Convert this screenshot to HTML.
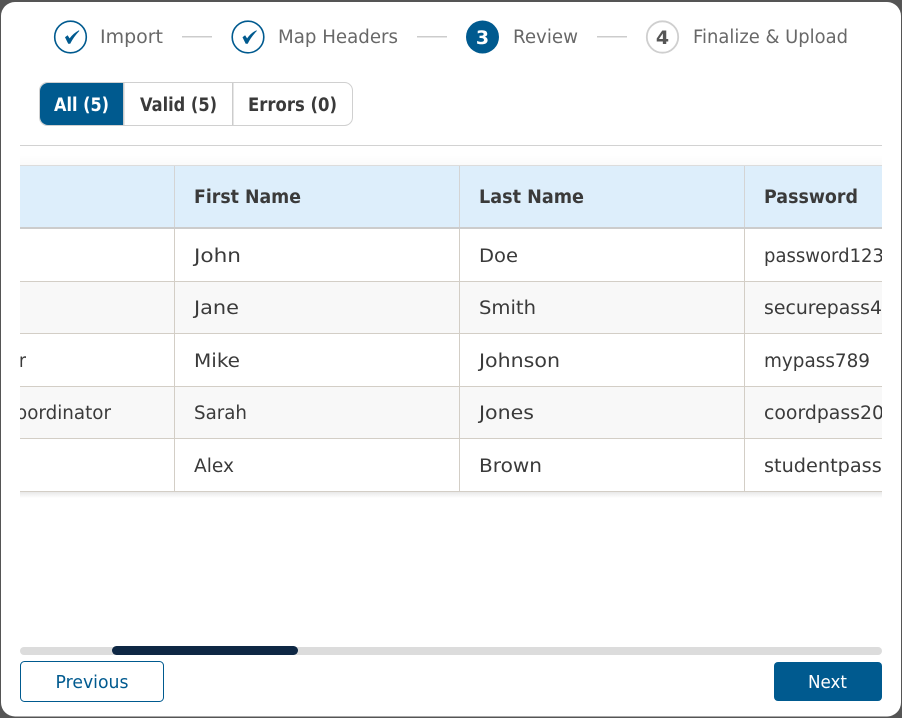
<!DOCTYPE html>
<html lang="en">
<head>
<meta charset="utf-8">
<title>Review</title>
<style>
html,body{margin:0;padding:0;width:902px;height:718px;overflow:hidden;background:#555}
svg{display:block}
text{font-family:"DejaVu Sans","Liberation Sans",sans-serif;font-size:18.500px;fill:#3a3a3a}
.s{fill:#686868}
.b{font-weight:700;fill:#3a3a3a;font-size:18.500px}
</style>
</head>
<body>
<svg width="902" height="718" viewBox="0 0 902 718" xmlns="http://www.w3.org/2000/svg">
<defs>
<clipPath id="c"><rect x="20" y="165" width="862" height="330"/></clipPath>
<linearGradient id="sh" x1="0" y1="0" x2="0" y2="1"><stop offset="0" stop-color="#000" stop-opacity=".09"/><stop offset="1" stop-color="#000" stop-opacity="0"/></linearGradient>
<linearGradient id="sh2" x1="0" y1="1" x2="0" y2="0"><stop offset="0" stop-color="#000" stop-opacity=".02"/><stop offset="1" stop-color="#000" stop-opacity="0"/></linearGradient>
</defs>
<rect x="1" y="2" width="900" height="714.500" rx="14" fill="#fff"/>

<!-- stepper -->
<circle cx="70.500" cy="37" r="15.800" fill="none" stroke="#005a8f" stroke-width="1.600"/>
<path d="M65 37.200L67.600 35.200L69.600 38.400C72 35 75 32.300 79 30.200L79.300 31C75.500 35 72.500 39 70.200 43.800H68.200Z" fill="#005a8f"/>
<text class="s" x="100" y="43" textLength="63" lengthAdjust="spacingAndGlyphs">Import</text>
<rect x="182" y="36" width="30" height="1.500" fill="#ccc"/>
<circle cx="248" cy="37" r="15.800" fill="none" stroke="#005a8f" stroke-width="1.600"/>
<path d="M242.500 37.200L245.100 35.200L247.100 38.400C249.500 35 252.500 32.300 256.500 30.200L256.800 31C253 35 250 39 247.700 43.800H245.700Z" fill="#005a8f"/>
<text class="s" x="278" y="43" textLength="120" lengthAdjust="spacingAndGlyphs">Map Headers</text>
<rect x="417" y="36" width="30" height="1.500" fill="#ccc"/>
<circle cx="482.500" cy="37" r="16.500" fill="#005a8f"/>
<text x="482.500" y="44" text-anchor="middle" style="fill:#fff;font-weight:700;font-size:19px">3</text>
<text class="s" x="513" y="43" textLength="65" lengthAdjust="spacingAndGlyphs">Review</text>
<rect x="597" y="36" width="30" height="1.500" fill="#ccc"/>
<circle cx="662.500" cy="37" r="15.700" fill="#fff" stroke="#cfcfcf" stroke-width="1.800"/>
<text x="662.500" y="44" text-anchor="middle" style="fill:#555;font-weight:700;font-size:19px">4</text>
<text class="s" x="693" y="43" textLength="155" lengthAdjust="spacingAndGlyphs">Finalize &amp; Upload</text>

<!-- tabs -->
<rect x="39.500" y="82.500" width="313" height="43" rx="8" fill="#fff" stroke="#d0d0d0"/>
<path d="M48 83H123V125H48a8 8 0 0 1-8-8V91a8 8 0 0 1 8-8z" fill="#005a8f"/>
<rect x="123" y="83" width="1.500" height="42" fill="#ccc"/>
<rect x="232" y="83" width="1.500" height="42" fill="#ccc"/>
<text class="b" x="54" y="111" textLength="55" lengthAdjust="spacingAndGlyphs" style="fill:#fff">All (5)</text>
<text class="b" x="140" y="111" textLength="77" lengthAdjust="spacingAndGlyphs">Valid (5)</text>
<text class="b" x="248" y="111" textLength="89" lengthAdjust="spacingAndGlyphs">Errors (0)</text>

<rect x="20" y="145" width="862" height="1" fill="#d2d2d2"/>
<rect x="20" y="155" width="862" height="10" fill="url(#sh2)"/>

<!-- table -->
<rect x="20" y="165" width="862" height="1" fill="#dcdcdc"/>
<rect x="20" y="166" width="862" height="61" fill="#ddeefb"/>
<rect x="20" y="227" width="862" height="2" fill="#ccc"/>
<rect x="20" y="282" width="862" height="51" fill="#f8f8f8"/>
<rect x="20" y="387" width="862" height="51" fill="#f8f8f8"/>
<g fill="#d3cec6">
<rect x="20" y="281" width="862" height="1"/>
<rect x="20" y="333" width="862" height="1"/>
<rect x="20" y="386" width="862" height="1"/>
<rect x="20" y="438" width="862" height="1"/>
<rect x="20" y="491" width="862" height="1"/>
<rect x="174" y="229" width="1" height="262"/>
<rect x="459" y="229" width="1" height="262"/>
<rect x="744" y="229" width="1" height="262"/>
</g>
<rect x="20" y="492" width="862" height="6" fill="url(#sh)"/>
<g fill="#d4d4d4">
<rect x="174" y="166" width="1" height="61"/>
<rect x="459" y="166" width="1" height="61"/>
<rect x="744" y="166" width="1" height="61"/>
</g>

<g clip-path="url(#c)">
<text class="b" x="194" y="203" textLength="107" lengthAdjust="spacingAndGlyphs">First Name</text>
<text class="b" x="479" y="203" textLength="105" lengthAdjust="spacingAndGlyphs">Last Name</text>
<text class="b" x="764" y="203" textLength="94" lengthAdjust="spacingAndGlyphs">Password</text>

<text x="194" y="262" textLength="47" lengthAdjust="spacingAndGlyphs">John</text>
<text x="479" y="262" textLength="39" lengthAdjust="spacingAndGlyphs">Doe</text>
<text x="764" y="262" textLength="120" lengthAdjust="spacingAndGlyphs">password123</text>

<text x="194" y="314" textLength="45" lengthAdjust="spacingAndGlyphs">Jane</text>
<text x="479" y="314" textLength="57" lengthAdjust="spacingAndGlyphs">Smith</text>
<text x="764" y="314" textLength="142" lengthAdjust="spacingAndGlyphs">securepass456</text>

<text x="19" y="367" textLength="7" lengthAdjust="spacingAndGlyphs">r</text>
<text x="194" y="367" textLength="46" lengthAdjust="spacingAndGlyphs">Mike</text>
<text x="479" y="367" textLength="81" lengthAdjust="spacingAndGlyphs">Johnson</text>
<text x="764" y="367" textLength="106" lengthAdjust="spacingAndGlyphs">mypass789</text>

<text x="16" y="419" textLength="95" lengthAdjust="spacingAndGlyphs">oordinator</text>
<text x="194" y="419" textLength="53" lengthAdjust="spacingAndGlyphs">Sarah</text>
<text x="479" y="419" textLength="55" lengthAdjust="spacingAndGlyphs">Jones</text>
<text x="764" y="419" textLength="120" lengthAdjust="spacingAndGlyphs">coordpass20</text>

<text x="194" y="472" textLength="40" lengthAdjust="spacingAndGlyphs">Alex</text>
<text x="479" y="472" textLength="63" lengthAdjust="spacingAndGlyphs">Brown</text>
<text x="764" y="472" textLength="130" lengthAdjust="spacingAndGlyphs">studentpass1</text>
</g>

<!-- scrollbar -->
<rect x="20" y="647" width="862" height="8" rx="4" fill="#dcdcdc"/>
<rect x="112" y="646" width="186" height="9" rx="4.500" fill="#0e2744"/>

<!-- buttons -->
<rect x="20.500" y="661.500" width="143" height="40" rx="4" fill="#fff" stroke="#005a8f"/>
<text x="55.500" y="688" textLength="73" lengthAdjust="spacingAndGlyphs" style="fill:#005a8f;font-size:17.500px">Previous</text>
<rect x="774" y="662" width="108" height="39" rx="4" fill="#005a8f"/>
<text x="808" y="688" textLength="39" lengthAdjust="spacingAndGlyphs" style="fill:#fff;font-size:17.500px">Next</text>
</svg>
</body>
</html>
